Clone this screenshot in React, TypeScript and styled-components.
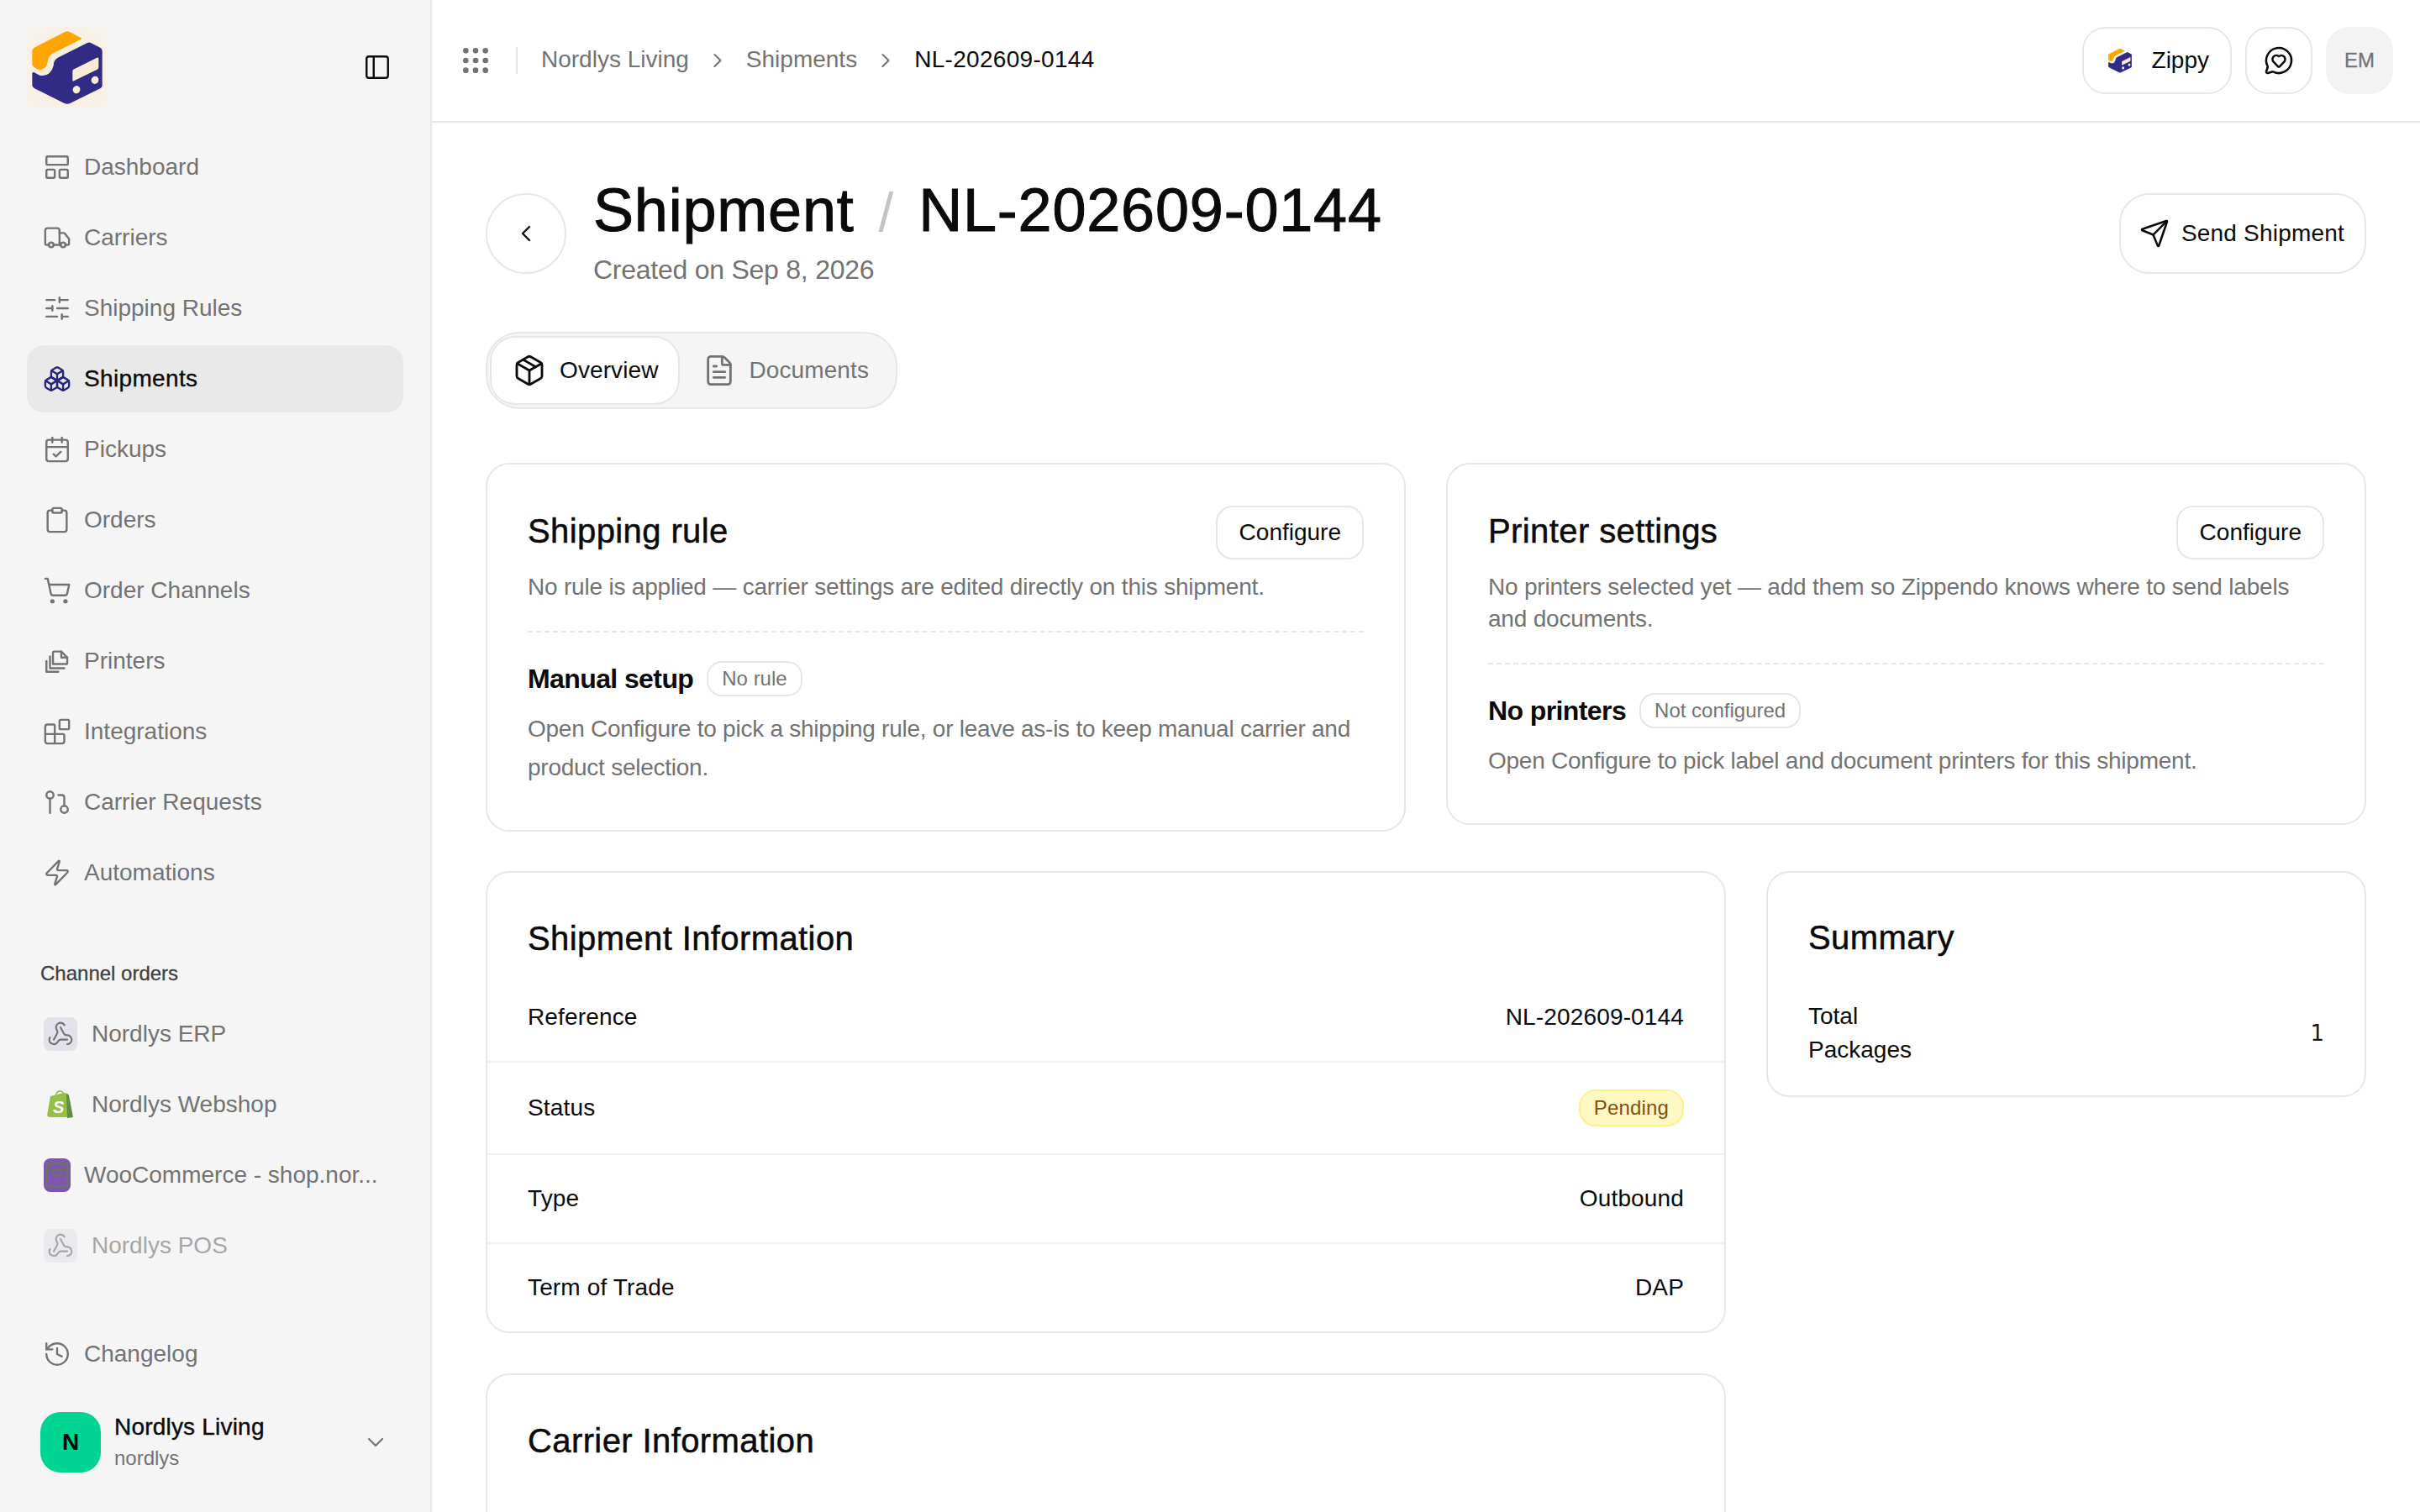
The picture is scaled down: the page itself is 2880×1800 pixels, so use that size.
import React from "react";
import styled, { createGlobalStyle } from "styled-components";
import {
  Blocks,
  Boxes,
  CalendarCheck,
  ChevronDown,
  ChevronLeft,
  ChevronRight,
  Clipboard,
  FileText,
  GitPullRequest,
  Grip,
  History,
  LayoutPanelTop,
  MessageCircleHeart,
  Package,
  PanelLeft,
  Send,
  ShoppingCart,
  SlidersHorizontal,
  Truck,
  Webhook,
  Zap,
} from "lucide-react";

const FONT = `"Liberation Sans", Arial, sans-serif`;

const GlobalStyle = createGlobalStyle`
  html, body {
    margin: 0;
    padding: 0;
    height: 100%;
    background: #fff;
    overflow: hidden;
  }
  body {
    font-family: ${FONT};
    font-size: 28px;
    color: #0a0a0a;
  }
  * { box-sizing: border-box; }
  #root { height: 100%; }
`;

const Page = styled.div`
  display: flex;
  width: 2880px;
  height: 1800px;
  overflow: hidden;
`;

const Sidebar = styled.aside`
  width: 514px;
  flex: none;
  height: 100%;
  display: flex;
  flex-direction: column;
  padding: 32px 32px 46px;
  background: #f5f5f5;
  border-right: 2px solid #e9e9eb;
`;

const LogoRow = styled.div`
  display: flex;
  align-items: center;
  justify-content: space-between;
  height: 96px;
  margin-bottom: 31px;
  padding-right: 14px;
`;

const ToggleButton = styled.span`
  display: flex;
  color: #0a0a0a;
`;

const NavList = styled.nav`
  display: flex;
  flex-direction: column;
  gap: 4px;
`;

const NavItem = styled.div<{ $active?: boolean; $faded?: boolean }>`
  display: flex;
  align-items: center;
  gap: 15px;
  height: 80px;
  padding: 0 20px 0 19px;
  border-radius: 20px;
  background: ${({ $active }) => ($active ? "#e9e9e9" : "transparent")};
  color: ${({ $active }) => ($active ? "#0a0a0a" : "#737373")};
  opacity: ${({ $faded }) => ($faded ? 0.6 : 1)};
  letter-spacing: ${({ $active }) => ($active ? "0.35px" : "0")};
  -webkit-text-stroke: ${({ $active }) => ($active ? "0.35px #0a0a0a" : "0")};
`;

const NavLabel = styled.span`
  overflow: hidden;
  white-space: nowrap;
`;

const IconSlot = styled.span<{ $color?: string }>`
  display: flex;
  flex: none;
  color: ${({ $color }) => $color || "inherit"};
`;

const SectionLabel = styled.div`
  margin: 64px 0 16px 16px;
  font-size: 24px;
  line-height: 32px;
  color: #404040;
  -webkit-text-stroke: 0.3px #404040;
`;

const ChannelItem = styled(NavItem)`
  gap: 17px;
  padding-left: 20px;
`;

const ChannelIcon = styled.span`
  display: flex;
  flex: none;
  align-items: center;
  justify-content: center;
  width: 40px;
  height: 40px;
  border-radius: 8px;
  color: #737373;
`;

const WebhookBadge = styled(ChannelIcon)`
  background: #e2e3ea;
`;

const WooBadge = styled(ChannelIcon)`
  width: 32px;
  background: #7f54b3;
  margin-right: -1px;
`;

const SidebarFooter = styled.div`
  margin-top: auto;
  display: flex;
  flex-direction: column;
  gap: 28px;
`;

const Account = styled.div`
  display: flex;
  align-items: center;
  gap: 16px;
  padding: 0 17px 0 16px;
`;

const AccountAvatar = styled.div`
  width: 72px;
  height: 72px;
  flex: none;
  display: flex;
  align-items: center;
  justify-content: center;
  border-radius: 24px;
  background: #00d492;
  font-weight: 700;
  font-size: 28px;
`;

const AccountText = styled.div`
  flex: 1;
  display: flex;
  flex-direction: column;
`;

const AccountName = styled.div`
  line-height: 38px;
  letter-spacing: 0.2px;
  -webkit-text-stroke: 0.4px #0a0a0a;
`;

const AccountHandle = styled.div`
  font-size: 24px;
  line-height: 36px;
  color: #737373;
`;

const Main = styled.div`
  flex: 1;
  min-width: 0;
  display: flex;
  flex-direction: column;
  height: 100%;
`;

const Topbar = styled.header`
  flex: none;
  height: 146px;
  display: flex;
  align-items: center;
  justify-content: space-between;
  padding: 0 32px;
  border-bottom: 2px solid #e7e7e9;
`;

const Crumbs = styled.div`
  display: flex;
  align-items: center;
  color: #737373;
`;

const CrumbDivider = styled.span`
  width: 2px;
  height: 32px;
  margin: 0 28px;
  background: #e5e5e5;
`;

const CrumbChevron = styled.span`
  display: flex;
  margin: 0 20px;
  color: #737373;
`;

const CrumbText = styled.span`
  margin-bottom: 2px;
`;

const CrumbCurrent = styled(CrumbText)`
  color: #0a0a0a;
  letter-spacing: 0.3px;
`;

const TopActions = styled.div`
  display: flex;
  align-items: center;
  gap: 16px;
`;

const PillButton = styled.div`
  display: flex;
  align-items: center;
  height: 80px;
  border: 2px solid #e7e7e9;
  border-radius: 28px;
  background: #fff;
`;

const ZippyButton = styled(PillButton)`
  gap: 22px;
  padding: 0 25px 0 27px;
`;

const IconButton = styled(PillButton)`
  width: 80px;
  justify-content: center;
`;

const UserChip = styled.div`
  width: 80px;
  height: 80px;
  display: flex;
  align-items: center;
  justify-content: center;
  border-radius: 28px;
  background: #f3f3f3;
  color: #737373;
  font-size: 24px;
  -webkit-text-stroke: 0.3px #737373;
`;

const Content = styled.main`
  flex: 1;
  overflow: hidden;
  padding: 62px 64px 0;
`;

const HeaderRow = styled.div`
  display: flex;
  align-items: center;
  justify-content: space-between;
`;

const HeaderLeft = styled.div`
  display: flex;
  align-items: center;
  gap: 32px;
`;

const BackButton = styled.div`
  width: 96px;
  height: 96px;
  flex: none;
  display: flex;
  align-items: center;
  justify-content: center;
  border: 2px solid #e7e7e9;
  border-radius: 50%;
`;

const HeaderText = styled.div`
  display: flex;
  flex-direction: column;
  gap: 2px;
  padding-bottom: 2px;
`;

const PageTitle = styled.h1`
  margin: 0;
  font-size: 72px;
  line-height: 84px;
  font-weight: 400;
  letter-spacing: 0.8px;
  -webkit-text-stroke: 1px #0a0a0a;
`;

const TitleSlash = styled.span`
  margin: 0 29px;
  color: #c4c4c4;
  font-size: 64px;
  -webkit-text-stroke: 0;
`;

const PageSubtitle = styled.div`
  font-size: 32px;
  line-height: 48px;
  letter-spacing: -0.25px;
  color: #737373;
`;

const SendButton = styled.div`
  height: 96px;
  display: flex;
  align-items: center;
  gap: 14px;
  padding: 0 24px 0 22px;
  border: 2px solid #e7e7e9;
  border-radius: 36px;
  letter-spacing: 0.2px;
`;

const TabList = styled.div`
  display: flex;
  width: fit-content;
  gap: 4px;
  margin-top: 48px;
  padding: 5px 9px 5px 5px;
  border: 2px solid #e7e7e9;
  border-radius: 40px;
  background: #f5f5f5;
`;

const Tab = styled.div<{ $active?: boolean }>`
  height: 78px;
  display: flex;
  align-items: center;
  gap: 16px;
  padding: 0 23px 0 25px;
  border-radius: 28px;
  letter-spacing: 0.1px;
  color: ${({ $active }) => ($active ? "#0a0a0a" : "#737373")};
  background: ${({ $active }) => ($active ? "#fff" : "transparent")};
  box-shadow: ${({ $active }) => ($active ? "0 0 0 2px #e7e7e9" : "none")};
`;

const TopCards = styled.div`
  display: grid;
  grid-template-columns: 1fr 1fr;
  gap: 48px;
  align-items: start;
  margin-top: 64px;
`;

const Card = styled.section`
  padding: 48px;
  border: 2px solid #e7e7e9;
  border-radius: 28px;
  background: #fff;
`;

const RuleCard = styled(Card)`
  padding-top: 49px;
  padding-bottom: 51px;
`;

const CardHead = styled.div`
  display: flex;
  align-items: flex-start;
  justify-content: space-between;
`;

const CardTitle = styled.h2`
  margin: 0;
  font-size: 40px;
  line-height: 60px;
  font-weight: 400;
  letter-spacing: 0.4px;
  -webkit-text-stroke: 0.5px #0a0a0a;
`;

const ConfigureButton = styled.div`
  height: 64px;
  display: flex;
  align-items: center;
  padding: 0 25px 0 26px;
  border: 2px solid #e7e7e9;
  border-radius: 20px;
  margin-bottom: 1px;
`;

const Muted = styled.p`
  margin: 13px 0 0;
  line-height: 38px;
  color: #737373;
  letter-spacing: -0.2px;
`;

const DashedLine = styled.div`
  margin-top: 33px;
  border-top: 2px dashed #e7e7e9;
`;

const SetupRow = styled.div`
  display: flex;
  align-items: center;
  gap: 16px;
  margin-top: 34px;
`;

const SetupName = styled.div`
  font-size: 32px;
  line-height: 42px;
  font-weight: 700;
  letter-spacing: -0.6px;
`;

const OutlineBadge = styled.span`
  height: 42px;
  display: flex;
  align-items: center;
  padding: 0 16px;
  border: 2px solid #e7e7e9;
  border-radius: 18px;
  font-size: 24px;
  color: #737373;
`;

const SetupText = styled.p`
  margin: 16px 0 0;
  line-height: 46px;
  color: #737373;
  letter-spacing: -0.25px;
`;

const DetailGrid = styled.div`
  display: grid;
  grid-template-columns: minmax(0, 1fr) 714px;
  gap: 48px;
  align-items: start;
  margin-top: 47px;
`;

const Column = styled.div`
  display: flex;
  flex-direction: column;
  gap: 48px;
`;

const TableCard = styled(Card)`
  padding: 48px 0 0;
`;

const CarrierCard = styled(TableCard)`
  min-height: 400px;
`;

const TableTitle = styled(CardTitle)`
  padding: 0 48px;
  margin-bottom: 12px;
`;

const InfoRow = styled.div<{ $last?: boolean }>`
  display: flex;
  align-items: center;
  justify-content: space-between;
  padding: 32px 48px;
  line-height: 40px;
  letter-spacing: 0.15px;
  border-bottom: ${({ $last }) => ($last ? "0" : "2px solid #f3f3f3")};
`;

const StatusBadge = styled.span`
  height: 44px;
  display: flex;
  align-items: center;
  padding: 0 16px;
  border: 2px solid #fef08a;
  border-radius: 20px;
  background: #fef9c3;
  color: #854d0e;
  font-size: 24px;
`;

const SummaryCard = styled(Card)`
  padding-top: 47px;
  padding-bottom: 34px;
`;

const SummaryRow = styled.div`
  display: flex;
  align-items: center;
  justify-content: space-between;
  margin-top: 44px;
  line-height: 40px;
`;

const SummaryLabel = styled.div`
  width: 120px;
`;

const SummaryValue = styled.span`
  font-family: "DejaVu Sans", sans-serif;
  font-size: 26px;
  color: #0f172a;
`;

const Logo = ({ size, glow }: { size: number; glow?: boolean }) => (
  <svg width={size} height={size} viewBox="36 36 288 288">
    {glow && (
      <>
        <defs>
          <radialGradient id="logoGlow" cx="50%" cy="55%" r="70%">
            <stop offset="0%" stopColor="#fbe6c4" />
            <stop offset="100%" stopColor="#f7f3ec" />
          </radialGradient>
        </defs>
        <rect x="36" y="36" width="288" height="288" fill="url(#logoGlow)" opacity="0.7" />
      </>
    )}
    <path
      d="M62 110 L172 54 Q180 50 188 54 L228 74 Q234 78 228 81 L132 129 Q112 138 110 160 Q108 184 84 190 Q74 190 62 180 Q55 175 55 168 L55 122 Q55 114 62 110 Z"
      fill="#ffa500"
    />
    <path
      d="M55 203 Q55 195 62 199 L82 209 Q120 216 131 175 Q131 155 146 146 L252 93 Q258 90 264 93 L298 110 Q305 114 305 122 L305 246 Q305 252 298 256 L190 309 Q180 313 170 309 L62 255 Q55 250 55 244 Z"
      fill="#322b85"
    />
    <path d="M202 188 L286 146 Q292 144 292 150 L292 180 Q292 186 287 188 L204 229 Q199 231 199 226 L199 194 Q199 190 202 188 Z" fill="#f8ecd9" />
    <ellipse cx="213" cy="260" rx="13" ry="14" transform="rotate(25 213 260)" fill="#f8ecd9" />
    <ellipse cx="279" cy="226" rx="13" ry="14" transform="rotate(25 279 226)" fill="#f8ecd9" />
  </svg>
);

const PrintersIcon = ({ size, strokeWidth }: { size: number; strokeWidth: number }) => (
  <svg
    width={size}
    height={size}
    viewBox="0 0 24 24"
    fill="none"
    stroke="currentColor"
    strokeWidth={strokeWidth}
    strokeLinecap="round"
    strokeLinejoin="round"
  >
    <path d="M8.5 13.5V5a1 1 0 0 1 1-1h6l5 5v4.5a1 1 0 0 1-1 1H8.5" />
    <path d="M15.5 4v5h5" />
    <path d="M6 8v10h12" />
    <path d="M3 12v9h10" />
  </svg>
);

const ShopifyIcon = () => (
  <svg width="40" height="34" viewBox="0 0 40 34">
    <path d="M8 7 L24 3 L29 4 L34 32 L6 32 L4 30 Z" fill="#95bf47" />
    <path d="M27 4 L30 6 L35 32 L28 33 Z" fill="#5e8e3e" />
    <path d="M14 6 Q16 0 20 1 Q24 2 24 6" fill="none" stroke="#95bf47" strokeWidth="1.6" />
    <text x="11" y="27" fontFamily="Liberation Sans" fontSize="20" fontWeight="700" fontStyle="italic" fill="#fff">
      S
    </text>
  </svg>
);

const WooIcon = () => (
  <svg width="32" height="40" viewBox="0 0 32 40" fill="none" stroke="#6f6f6f" strokeWidth="3" strokeLinecap="round" strokeLinejoin="round">
    <rect x="4" y="6" width="24" height="28" rx="3" />
    <path d="M4 14h24" />
    <path d="M11 18c1 4 9 4 10 0" />
  </svg>
);

const NAV = [
  { label: "Dashboard", Icon: LayoutPanelTop },
  { label: "Carriers", Icon: Truck },
  { label: "Shipping Rules", Icon: SlidersHorizontal },
  { label: "Shipments", Icon: Boxes, active: true },
  { label: "Pickups", Icon: CalendarCheck },
  { label: "Orders", Icon: Clipboard },
  { label: "Order Channels", Icon: ShoppingCart },
  { label: "Printers", Icon: PrintersIcon },
  { label: "Integrations", Icon: Blocks },
  { label: "Carrier Requests", Icon: GitPullRequest },
  { label: "Automations", Icon: Zap },
];

const App = () => (
  <Page>
    <GlobalStyle />
    <Sidebar>
      <LogoRow>
        <Logo size={96} glow />
        <ToggleButton>
          <PanelLeft size={34} strokeWidth={1.7} />
        </ToggleButton>
      </LogoRow>
      <NavList>
        {NAV.map(({ label, Icon, active }) => (
          <NavItem key={label} $active={active}>
            <IconSlot $color={active ? "#26267f" : undefined}>
              <Icon size={34} strokeWidth={1.7} />
            </IconSlot>
            <NavLabel>{label}</NavLabel>
          </NavItem>
        ))}
      </NavList>
      <SectionLabel>Channel orders</SectionLabel>
      <NavList>
        <ChannelItem>
          <WebhookBadge>
            <Webhook size={32} strokeWidth={1.6} />
          </WebhookBadge>
          <NavLabel>Nordlys ERP</NavLabel>
        </ChannelItem>
        <ChannelItem>
          <ChannelIcon>
            <ShopifyIcon />
          </ChannelIcon>
          <NavLabel>Nordlys Webshop</NavLabel>
        </ChannelItem>
        <ChannelItem>
          <WooBadge>
            <WooIcon />
          </WooBadge>
          <NavLabel>WooCommerce - shop.nor...</NavLabel>
        </ChannelItem>
        <ChannelItem $faded>
          <WebhookBadge>
            <Webhook size={32} strokeWidth={1.6} />
          </WebhookBadge>
          <NavLabel>Nordlys POS</NavLabel>
        </ChannelItem>
      </NavList>
      <SidebarFooter>
        <NavItem>
          <IconSlot>
            <History size={34} strokeWidth={1.7} />
          </IconSlot>
          <NavLabel>Changelog</NavLabel>
        </NavItem>
        <Account>
          <AccountAvatar>N</AccountAvatar>
          <AccountText>
            <AccountName>Nordlys Living</AccountName>
            <AccountHandle>nordlys</AccountHandle>
          </AccountText>
          <IconSlot $color="#737373">
            <ChevronDown size={32} strokeWidth={1.6} />
          </IconSlot>
        </Account>
      </SidebarFooter>
    </Sidebar>
    <Main>
      <Topbar>
        <Crumbs>
          <IconSlot>
            <Grip size={40} fill="currentColor" />
          </IconSlot>
          <CrumbDivider />
          <CrumbText>Nordlys Living</CrumbText>
          <CrumbChevron>
            <ChevronRight size={28} strokeWidth={1.8} />
          </CrumbChevron>
          <CrumbText>Shipments</CrumbText>
          <CrumbChevron>
            <ChevronRight size={28} strokeWidth={1.8} />
          </CrumbChevron>
          <CrumbCurrent>NL-202609-0144</CrumbCurrent>
        </Crumbs>
        <TopActions>
          <ZippyButton>
            <Logo size={32} />
            Zippy
          </ZippyButton>
          <IconButton>
            <MessageCircleHeart size={36} strokeWidth={1.7} />
          </IconButton>
          <UserChip>EM</UserChip>
        </TopActions>
      </Topbar>
      <Content>
        <HeaderRow>
          <HeaderLeft>
            <BackButton>
              <ChevronLeft size={32} strokeWidth={1.8} />
            </BackButton>
            <HeaderText>
              <PageTitle>
                Shipment<TitleSlash>/</TitleSlash>NL-202609-0144
              </PageTitle>
              <PageSubtitle>Created on Sep 8, 2026</PageSubtitle>
            </HeaderText>
          </HeaderLeft>
          <SendButton>
            <Send size={36} strokeWidth={1.7} />
            Send Shipment
          </SendButton>
        </HeaderRow>
        <TabList>
          <Tab $active>
            <Package size={40} strokeWidth={1.7} />
            Overview
          </Tab>
          <Tab>
            <FileText size={40} strokeWidth={1.7} />
            Documents
          </Tab>
        </TabList>
        <TopCards>
          <RuleCard>
            <CardHead>
              <CardTitle>Shipping rule</CardTitle>
              <ConfigureButton>Configure</ConfigureButton>
            </CardHead>
            <Muted>No rule is applied — carrier settings are edited directly on this shipment.</Muted>
            <DashedLine />
            <SetupRow>
              <SetupName>Manual setup</SetupName>
              <OutlineBadge>No rule</OutlineBadge>
            </SetupRow>
            <SetupText>
              Open Configure to pick a shipping rule, or leave as-is to keep manual carrier and product selection.
            </SetupText>
          </RuleCard>
          <RuleCard>
            <CardHead>
              <CardTitle>Printer settings</CardTitle>
              <ConfigureButton>Configure</ConfigureButton>
            </CardHead>
            <Muted>No printers selected yet — add them so Zippendo knows where to send labels and documents.</Muted>
            <DashedLine />
            <SetupRow>
              <SetupName>No printers</SetupName>
              <OutlineBadge>Not configured</OutlineBadge>
            </SetupRow>
            <SetupText>Open Configure to pick label and document printers for this shipment.</SetupText>
          </RuleCard>
        </TopCards>
        <DetailGrid>
          <Column>
            <TableCard>
              <TableTitle>Shipment Information</TableTitle>
              <InfoRow>
                <span>Reference</span>
                <span>NL-202609-0144</span>
              </InfoRow>
              <InfoRow>
                <span>Status</span>
                <StatusBadge>Pending</StatusBadge>
              </InfoRow>
              <InfoRow>
                <span>Type</span>
                <span>Outbound</span>
              </InfoRow>
              <InfoRow $last>
                <span>Term of Trade</span>
                <span>DAP</span>
              </InfoRow>
            </TableCard>
            <CarrierCard>
              <TableTitle>Carrier Information</TableTitle>
            </CarrierCard>
          </Column>
          <SummaryCard>
            <CardTitle>Summary</CardTitle>
            <SummaryRow>
              <SummaryLabel>Total Packages</SummaryLabel>
              <SummaryValue>1</SummaryValue>
            </SummaryRow>
          </SummaryCard>
        </DetailGrid>
      </Content>
    </Main>
  </Page>
);

export default App;
